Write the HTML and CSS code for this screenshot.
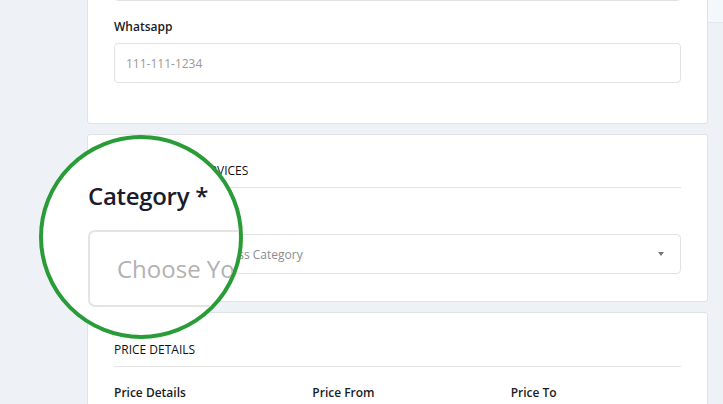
FILE: index.html
```html
<!DOCTYPE html>
<html lang="en">
<head>
    <meta charset="UTF-8">
    <meta name="viewport" content="width=device-width, initial-scale=1.0">
    <title>Add Listing</title>
    <link rel="stylesheet" href="styles.css">
</head>
<body>

	<div class="layout">
		<div class="main">

			<div class="card contact">
				<div class="field">
					<label for="phone">Phone</label>
					<input id="phone" type="text" placeholder="111-111-1234"/>
				</div>
				<div class="field">
					<label for="whatsapp">Whatsapp</label>
					<input id="whatsapp" type="text" placeholder="111-111-1234"/>
				</div>
			</div>

			<div class="card">
				<h4 class="card-title">CATEGORY OF SERVICES</h4>
				<div class="field category">
					<label for="category">Category *</label>
					<div class="select" id="category">
						<span>Choose Your Business Category</span>
						<i class="caret"></i>
					</div>
				</div>
			</div>

			<div class="card price">
				<h4 class="card-title">PRICE DETAILS</h4>
				<div class="price-row">
					<label>Price Details</label>
					<label>Price From</label>
					<label>Price To</label>
				</div>
			</div>

		</div>
		<div class="side">
			<div class="side-top"></div>
		</div>
	</div>

	<!-- zoom lens over the category field -->
	<div class="lens">
		<div class="lens-inner">
			<div class="lens-label">Category *</div>
			<div class="lens-select">Choose Your Business Category</div>
		</div>
	</div>

</body>
</html>
```

FILE: styles.css
```css
* {
	box-sizing: border-box;
	font-family: "Open Sans", "Liberation Sans", Arial, sans-serif;
}
html, body {
	margin: 0;
	height: 100%;
	overflow: hidden;
}
body {
	background-color: #eef2f6;
	position: relative;
}
.layout {
	display: flex;
	padding-left: 87px;
}
.main {
	width: 621px;
	margin-top: -84px;
}
.side {
	flex: 1;
}
.side-top {
	height: 23px;
	background-color: #f5f8fb;
	border-bottom: 1px solid #e4e8ed;
}

.card {
	background-color: #fff;
	border: 1px solid #dfe3e8;
	border-radius: 3px;
	padding: 28px 26px 27px;
	margin-bottom: 10px;
}
.card.contact {
	padding: 20px 26px 40px;
}
.card.price {
	padding-top: 29px;
}
.card-title {
	margin: 0;
	font-size: 12px;
	font-weight: 500;
	line-height: 16px;
	color: #111;
	padding-bottom: 8px;
	border-bottom: 1px solid #e3e3e3;
}

label {
	display: block;
	font-size: 12px;
	font-weight: 600;
	line-height: 16px;
	color: #1b1b26;
	margin-bottom: 8px;
}
.field + .field {
	margin-top: 18px;
}
.field.category {
	margin-top: 22px;
}
input, .select {
	display: block;
	width: 100%;
	height: 40px;
	padding: 0 11px;
	border: 1px solid #e2e2e2;
	border-radius: 4px;
	font-size: 12px;
	color: #333;
	background-color: #fff;
	outline: none;
}
input::placeholder {
	color: #9a9a9a;
}
.select {
	display: flex;
	align-items: center;
	justify-content: space-between;
	color: #8d8d8d;
}
.caret {
	width: 0;
	height: 0;
	margin-right: 5px;
	border-left: 3px solid transparent;
	border-right: 3px solid transparent;
	border-top: 4px solid #777;
}

.price-row {
	display: grid;
	grid-template-columns: repeat(3, 1fr);
	gap: 28px;
	margin-top: 18px;
}

.lens {
	position: absolute;
	left: 39px;
	top: 135px;
	width: 204px;
	height: 204px;
	border-radius: 50%;
	border: 4px solid #2a9c37;
	background-color: #fff;
	overflow: hidden;
}
.lens-inner {
	padding: 41px 0 0 45px;
	width: 600px;
}
.lens-label {
	font-size: 24px;
	font-weight: 600;
	line-height: 32px;
	color: #1b1b2e;
	letter-spacing: -0.3px;
}
.lens-select {
	margin-top: 18px;
	height: 77px;
	border: 2px solid #e4e4e4;
	border-radius: 7px;
	padding-left: 27px;
	display: flex;
	align-items: center;
	font-size: 24px;
	color: #b2b2b2;
}
```
